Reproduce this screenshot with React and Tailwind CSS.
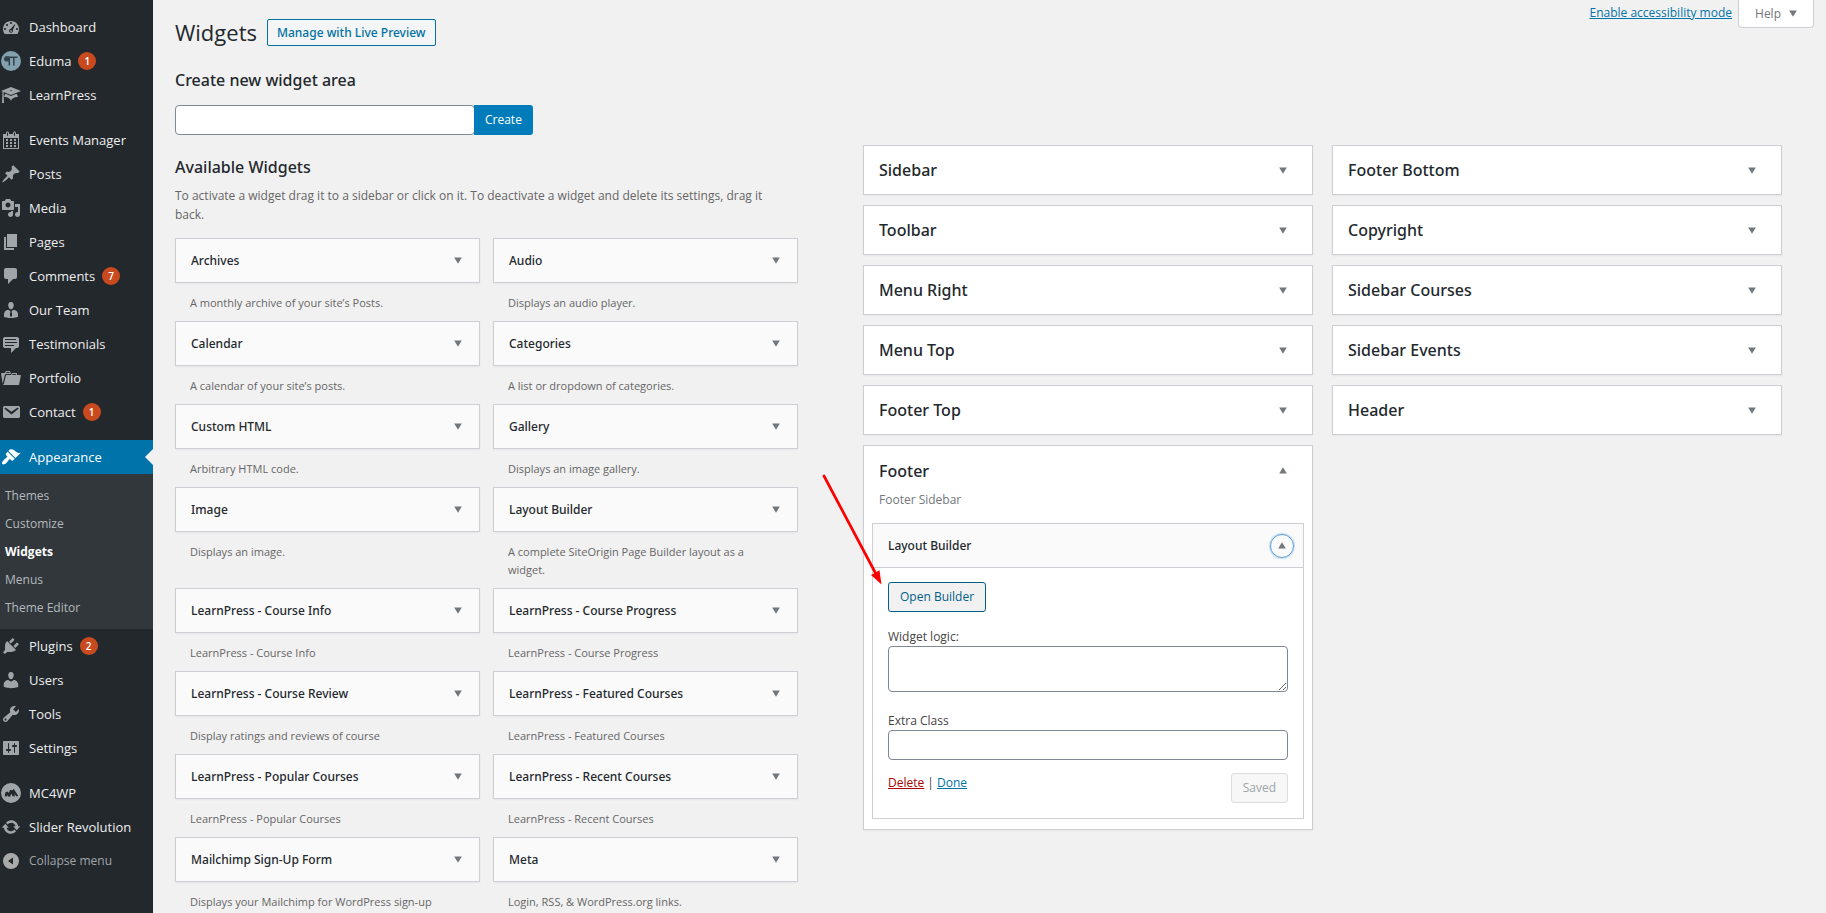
import { useState } from 'react'

// 20x20 glyphs for the admin menu
const ICONS = {
  dashboard:
    'M3.76 17h12.48c1.1-1.37 1.76-3.11 1.76-5 0-4.42-3.58-8-8-8s-8 3.58-8 8c0 1.89.66 3.63 1.76 5zM10 5c.55 0 1 .45 1 1s-.45 1-1 1-1-.45-1-1 .45-1 1-1zM6 7c.55 0 1 .45 1 1s-.45 1-1 1-1-.45-1-1 .45-1 1-1zM13.6 7.2l.6.4-2.2 5.2c.3 1.9-.6 3-2 3-1.5 0-2.3-1.3-1.9-2.5.3-.9 1-1.4 1.8-1.5zM10 13.2c-.6 0-1 .4-1 .9s.4.9 1 .9 1-.4 1-.9-.4-.9-1-.9zM4 11c.55 0 1 .45 1 1s-.45 1-1 1-1-.45-1-1 .45-1 1-1zM16 11c.55 0 1 .45 1 1s-.45 1-1 1-1-.45-1-1 .45-1 1-1z',
  learn:
    'M10 10L2.54 7.02 3 18H1l.48-11.41L0 6l10-4 10 4zm0-5c-.55 0-1 .22-1 .5s.45.5 1 .5 1-.22 1-.5-.45-.5-1-.5zm0 6l5.57-2.23c.71.94 1.2 2.07 1.36 3.3-.3-.04-.61-.07-.93-.07-2.55 0-4.78 1.37-6 3.41C8.78 13.37 6.55 12 4 12c-.32 0-.63.03-.93.07.16-1.23.65-2.36 1.36-3.3z',
  calendar:
    'M15 4h3v15H2V4h3V3c0-.41.15-.76.44-1.06.29-.29.65-.44 1.06-.44s.77.15 1.06.44c.29.3.44.65.44 1.06v1h4V3c0-.41.15-.76.44-1.06.29-.29.65-.44 1.06-.44s.77.15 1.06.44c.29.3.44.65.44 1.06v1zM6 3v2.5c0 .14.05.26.15.36.09.09.21.14.35.14s.26-.05.35-.14c.1-.1.15-.22.15-.36V3c0-.14-.05-.26-.15-.35-.09-.1-.21-.15-.35-.15s-.26.05-.35.15c-.1.09-.15.21-.15.35zm7 0v2.5c0 .14.05.26.14.36.1.09.22.14.36.14s.26-.05.36-.14c.09-.1.14-.22.14-.36V3c0-.14-.05-.26-.14-.35-.1-.1-.22-.15-.36-.15s-.26.05-.36.15c-.09.09-.14.21-.14.35zm4 15V8H3v10h14zM7 9v2H5V9h2zm2 0h2v2H9V9zm4 2V9h2v2h-2zm-6 1v2H5v-2h2zm2 0h2v2H9v-2zm4 2v-2h2v2h-2zm-6 1v2H5v-2h2zm4 2H9v-2h2v2zm4 0h-2v-2h2v2z',
  pin: 'M10.44 3.02l1.82-1.82 6.36 6.35-1.83 1.82c-1.05-.68-2.48-.57-3.41.36l-.75.75c-.92.93-1.04 2.35-.35 3.41l-1.83 1.82-2.41-2.41-2.8 2.79c-.42.42-3.38 2.71-3.8 2.29s1.86-3.39 2.28-3.81l2.79-2.79L4.1 9.36l1.83-1.82c1.05.69 2.48.57 3.4-.36l.75-.75c.93-.92 1.05-2.35.36-3.41z',
  media:
    'M13 11V4c0-.55-.45-1-1-1h-1.67L9 1H5L3.67 3H2c-.55 0-1 .45-1 1v7c0 .55.45 1 1 1h10c.55 0 1-.45 1-1zM7 4.5c1.38 0 2.5 1.12 2.5 2.5S8.38 9.5 7 9.5 4.5 8.38 4.5 7 5.62 4.5 7 4.5zM14 6h5v10.5c0 1.38-1.12 2.5-2.5 2.5S14 17.88 14 16.5s1.12-2.5 2.5-2.5c.17 0 .34.02.5.05V9h-3V6zm-4 8.05V13h2v3.5c0 1.38-1.12 2.5-2.5 2.5S7 17.88 7 16.5 8.12 14 9.5 14c.17 0 .34.02.5.05z',
  page: 'M6 15V2h10v13H6zm-1 1h8v2H3V5h2v11z',
  comment:
    'M5 2h9c1.1 0 2 .9 2 2v7c0 1.1-.9 2-2 2h-2l-5 5v-5H5c-1.1 0-2-.9-2-2V4c0-1.1.9-2 2-2z',
  person:
    'M7.3 6l-.03-.19c-.04-.37-.05-.73-.03-1.08.02-.36.1-.71.25-1.04.14-.32.31-.61.52-.86s.49-.46.83-.6c.34-.15.72-.23 1.13-.23.69 0 1.26.2 1.71.59s.76.87.91 1.44.18 1.16.09 1.78l-.03.19c-.01.09-.05.25-.11.48-.05.24-.12.47-.2.69-.08.21-.19.45-.34.72-.14.27-.3.49-.47.69-.18.19-.4.34-.67.48-.27.13-.55.19-.86.19s-.59-.06-.87-.19c-.26-.13-.49-.29-.67-.5-.18-.2-.34-.42-.49-.66-.15-.25-.26-.49-.34-.73-.09-.25-.16-.47-.21-.67-.06-.21-.1-.37-.12-.5zm9.2 6.24c.41.7.5 1.41.5 2.14v2.49c0 .03-.12.08-.29.13-.18.04-.42.13-.97.27-.55.12-1.1.24-1.65.34s-1.19.19-1.95.27c-.75.08-1.46.12-2.13.12-.68 0-1.39-.04-2.14-.12-.75-.07-1.4-.17-1.98-.27-.58-.11-1.08-.23-1.56-.34-.49-.11-.8-.21-1.06-.29L3 16.87v-2.49c0-.75.07-1.46.46-2.15s.81-1.25 1.5-1.68C5.66 10.12 7.19 10 8 10l1.67 1.67L9 13v3l1.02 1.08L11 16v-3l-.68-1.33L11.97 10c.77 0 2.2.07 2.9.52.71.45 1.21 1.02 1.63 1.72z',
  testimonial:
    'M4 3h12c.55 0 1.02.2 1.41.59S18 4.45 18 5v7c0 .55-.2 1.02-.59 1.41S16.55 14 16 14h-1l-5 5v-5H4c-.55 0-1.02-.2-1.41-.59S2 12.55 2 12V5c0-.55.2-1.02.59-1.41S3.45 3 4 3zm11 2H4v1h11V5zm1 3H4v1h12V8zm-3 3H4v1h9v-1z',
  portfolio:
    'M4 5H.78c-.37 0-.74.32-.69.84l1.56 9.99S3.5 8.47 3.86 6.7c.11-.53.61-.7.98-.7H10s-.7-2.08-.77-2.31C9.11 3.25 8.89 3 8.45 3H5.14c-.36 0-.7.23-.8.64C4.25 4.04 4 5 4 5zm4.88 0h-4s.42-1 .87-1h2.13c.48 0 1 1 1 1zM2.67 16.25c-.31.47-.76.75-1.26.75h15.73c.54 0 .92-.31 1.03-.83.44-2.19 1.68-8.44 1.68-8.44.07-.5-.3-.73-.62-.73H16V5.53c0-.16-.26-.53-.66-.53h-3.76c-.52 0-.87.58-.87.58L10 7H5.59c-.32 0-.63.19-.69.5 0 0-1.59 6.7-1.72 7.33-.07.37-.22.99-.51 1.42zM15.38 7H11s.58-1 1.13-1h2.29c.71 0 .96 1 .96 1z',
  email:
    'M3.87 4h13.25C18.37 4 19 4.59 19 5.79v8.42c0 1.19-.63 1.79-1.88 1.79H3.87c-1.25 0-1.88-.6-1.88-1.79V5.79c0-1.2.63-1.79 1.88-1.79zm6.62 8.6l6.74-5.53c.24-.2.43-.66.13-1.07-.29-.41-.82-.42-1.17-.17l-5.7 3.86L4.8 5.83c-.35-.25-.88-.24-1.17.17-.3.41-.11.87.13 1.07z',
  brush:
    'M14.48 11.06L7.41 3.99l1.5-1.5c.5-.56 2.3-.47 3.51.32 1.21.8 1.43 1.28 2.91 2.1 1.18.64 2.45 1.26 4.45.85zm-.71.71L6.7 4.7 4.93 6.47c-.39.39-.39 1.02 0 1.41l1.06 1.06c.39.39.39 1.03 0 1.42-.6.6-1.43 1.11-2.21 1.69-.35.26-.7.53-1.01.84C1.43 14.23.4 16.08 1.4 17.07c.99 1 2.84-.03 4.18-1.36.31-.31.58-.66.85-1.02.57-.78 1.08-1.61 1.69-2.21.39-.39 1.02-.39 1.41 0l1.06 1.06c.39.39 1.02.39 1.41 0z',
  plug: 'M13.11 4.36L9.87 7.6 8 5.73l3.24-3.24c.35-.34 1.05-.2 1.56.32.52.51.66 1.21.31 1.55zm-8 1.77l.91-1.12 9.01 9.01-1.19.84c-.71.71-2.63 1.16-3.82 1.16H6.14L4.9 17.26c-.59.59-1.54.59-2.12 0-.59-.58-.59-1.53 0-2.12l1.24-1.24v-3.88c0-1.13.4-3.19 1.09-3.89zm7.26 3.97l3.24-3.24c.34-.35 1.04-.21 1.55.31.52.51.66 1.21.31 1.55l-3.24 3.25z',
  user: 'M10 9.25c-2.27 0-2.73-3.44-2.73-3.44C7 4.02 7.82 2 9.97 2c2.16 0 2.98 2.02 2.71 3.81 0 0-.41 3.44-2.68 3.44zm0 2.57L12.72 10c2.39 0 4.52 2.33 4.52 4.53v2.49s-3.65 1.13-7.24 1.13c-3.65 0-7.24-1.13-7.24-1.13v-2.49c0-2.25 1.94-4.48 4.47-4.48z',
  wrench:
    'M16.68 9.77c-1.34 1.34-3.3 1.67-4.95.99l-5.41 6.52c-.99.99-2.59.99-3.58 0s-.99-2.59 0-3.57l6.52-5.42c-.68-1.65-.35-3.61.99-4.95 1.28-1.28 3.12-1.62 4.72-1.06l-2.89 2.89 2.82 2.82 2.86-2.87c.53 1.58.18 3.39-1.08 4.65zM3.81 16.21c.4.39 1.04.39 1.43 0 .4-.4.4-1.04 0-1.43-.39-.4-1.03-.4-1.43 0-.39.39-.39 1.03 0 1.43z',
  settings:
    'M18 16V4c0-.55-.45-1-1-1H3c-.55 0-1 .45-1 1v12c0 .55.45 1 1 1h14c.55 0 1-.45 1-1zM8 11h1c.55 0 1 .45 1 1s-.45 1-1 1H8v1.5c0 .28-.22.5-.5.5s-.5-.22-.5-.5V13H6c-.55 0-1-.45-1-1s.45-1 1-1h1V5.5c0-.28.22-.5.5-.5s.5.22.5.5V11zm5-2h-1c-.55 0-1-.45-1-1s.45-1 1-1h1V5.5c0-.28.22-.5.5-.5s.5.22.5.5V7h1c.55 0 1 .45 1 1s-.45 1-1 1h-1v5.5c0 .28-.22.5-.5.5s-.5-.22-.5-.5V9z',
  mc4wp:
    'M10 0a10 10 0 100 20 10 10 0 000-20zM3.6 13.2l.9-4 2.2-.8 1 1.6 1.3-3 2.3.3L12.8 6l4.4 6.7-1.7.8-2.1-2.7.4 2.7-2.1-.2-1.3-2.5-1.4 3-1.8-.4-.5-1.5-.9 1.6z',
  update:
    'M10.2 3.28c3.53 0 6.43 2.61 6.92 6h2.08l-3.5 4-3.5-4h2.32c-.45-1.97-2.21-3.45-4.32-3.45-1.45 0-2.73.71-3.54 1.78L4.95 5.66C6.23 4.2 8.11 3.28 10.2 3.28zm-.4 13.44c-3.52 0-6.43-2.61-6.92-6H.8l3.5-4c1.17 1.33 2.33 2.67 3.5 4H5.48c.45 1.97 2.21 3.45 4.32 3.45 1.45 0 2.73-.71 3.54-1.78l1.71 1.95c-1.28 1.46-3.15 2.38-5.25 2.38z',
  collapse: 'M10 2a8 8 0 100 16 8 8 0 000-16zM12 6.5v7L7 10z',
}

const MENU_TOP = [
  { label: 'Dashboard', icon: 'dashboard' },
  { label: 'Eduma', icon: 'eduma', count: 1 },
  { label: 'LearnPress', icon: 'learn' },
]

const MENU_CONTENT = [
  { label: 'Events Manager', icon: 'calendar' },
  { label: 'Posts', icon: 'pin' },
  { label: 'Media', icon: 'media' },
  { label: 'Pages', icon: 'page' },
  { label: 'Comments', icon: 'comment', count: 7 },
  { label: 'Our Team', icon: 'person' },
  { label: 'Testimonials', icon: 'testimonial' },
  { label: 'Portfolio', icon: 'portfolio' },
  { label: 'Contact', icon: 'email', count: 1 },
]

const APPEARANCE = ['Themes', 'Customize', 'Widgets', 'Menus', 'Theme Editor']

const MENU_ADMIN = [
  { label: 'Plugins', icon: 'plug', count: 2 },
  { label: 'Users', icon: 'user' },
  { label: 'Tools', icon: 'wrench' },
  { label: 'Settings', icon: 'settings' },
]

const MENU_EXTRA = [
  { label: 'MC4WP', icon: 'mc4wp' },
  { label: 'Slider Revolution', icon: 'update' },
]

const WIDGETS = [
  ['Archives', 'A monthly archive of your site’s Posts.'],
  ['Audio', 'Displays an audio player.'],
  ['Calendar', 'A calendar of your site’s posts.'],
  ['Categories', 'A list or dropdown of categories.'],
  ['Custom HTML', 'Arbitrary HTML code.'],
  ['Gallery', 'Displays an image gallery.'],
  ['Image', 'Displays an image.'],
  ['Layout Builder', 'A complete SiteOrigin Page Builder layout as a widget.'],
  ['LearnPress - Course Info', 'LearnPress - Course Info'],
  ['LearnPress - Course Progress', 'LearnPress - Course Progress'],
  ['LearnPress - Course Review', 'Display ratings and reviews of course'],
  ['LearnPress - Featured Courses', 'LearnPress - Featured Courses'],
  ['LearnPress - Popular Courses', 'LearnPress - Popular Courses'],
  ['LearnPress - Recent Courses', 'LearnPress - Recent Courses'],
  ['Mailchimp Sign-Up Form', 'Displays your Mailchimp for WordPress sign-up'],
  ['Meta', 'Login, RSS, & WordPress.org links.'],
]

const AREAS_LEFT = ['Sidebar', 'Toolbar', 'Menu Right', 'Menu Top', 'Footer Top']
const AREAS_RIGHT = ['Footer Bottom', 'Copyright', 'Sidebar Courses', 'Sidebar Events', 'Header']

function Icon({ name, className }) {
  if (name === 'eduma') {
    return (
      <svg viewBox="0 0 20 20" className="size-5 shrink-0" aria-hidden="true">
        <circle cx="10" cy="10" r="10" fill="#82a0ad" />
        <path d="M8 5.5H5.5a2.3 2.3 0 000 5H8z" fill="#32424c" />
        <path d="M4 6.2h12.5M8.300 6v8.500M12.800 6v8.500" fill="none" stroke="#32424c" strokeWidth="1.500" />
      </svg>
    )
  }
  return (
    <svg viewBox="0 0 20 20" className={`size-5 shrink-0 ${className}`} fill="currentColor" fillRule="evenodd" aria-hidden="true">
      <path d={ICONS[name]} />
    </svg>
  )
}

function Caret({ up }) {
  return (
    <svg viewBox="0 0 8 7" className="h-[7px] w-2 shrink-0" fill="#72777c" aria-hidden="true">
      <path d={up ? 'M.2 6.5L4 .2l3.8 6.3z' : 'M.2.5h7.6L4 6.8z'} />
    </svg>
  )
}

function MenuItem({ item }) {
  return (
    <li>
      <a href="#" className="flex h-[34px] items-center pl-px text-[#eee]">
        <Icon name={item.icon} className="text-[#a0a5aa]" />
        <span className="ml-2">{item.label}</span>
        {item.count && (
          <span className="ml-[7px] flex size-[18px] items-center justify-center rounded-full bg-[#ca4a1f] text-[10px] font-semibold text-white">
            {item.count}
          </span>
        )}
      </a>
    </li>
  )
}

function AdminMenu() {
  return (
    <nav className="w-[153px] shrink-0 bg-[#23282d] pt-2.5 text-[13px] leading-[18px]">
      <ul>
        {MENU_TOP.map((item) => (
          <MenuItem key={item.label} item={item} />
        ))}
      </ul>
      <ul className="mt-[11px]">
        {MENU_CONTENT.map((item) => (
          <MenuItem key={item.label} item={item} />
        ))}
      </ul>
      <a href="#" className="relative mt-[11px] flex h-[34px] items-center bg-[#0073aa] pl-px text-white">
        <Icon name="brush" className="text-white" />
        <span className="ml-2">Appearance</span>
        <span className="absolute right-0 top-[9px] border-y-8 border-r-8 border-y-transparent border-r-[#f1f1f1]" />
      </a>
      <ul className="bg-[#32373c] pb-[7px] pt-2 text-[12px]">
        {APPEARANCE.map((label) => (
          <li key={label}>
            <a
              href="#"
              className={`flex h-7 items-center pl-[5px] ${label === 'Widgets' ? 'font-bold text-white' : 'text-[#b4b9be]'}`}
            >
              {label}
            </a>
          </li>
        ))}
      </ul>
      <ul>
        {MENU_ADMIN.map((item) => (
          <MenuItem key={item.label} item={item} />
        ))}
      </ul>
      <ul className="mt-[11px]">
        {MENU_EXTRA.map((item) => (
          <MenuItem key={item.label} item={item} />
        ))}
      </ul>
      <button type="button" className="flex h-[34px] items-center pl-px text-[12px] text-[#a0a5aa]">
        <Icon name="collapse" className="text-[#aaa]" />
        <span className="ml-2">Collapse menu</span>
      </button>
    </nav>
  )
}

function Widget({ title, description }) {
  return (
    <div>
      <button
        type="button"
        className="flex h-[45px] w-full items-center justify-between border border-[#ccd0d4] bg-[#fafafa] pl-[15px] pr-[17px] font-['Noto_Sans','Open_Sans',sans-serif] text-[12px] font-medium shadow-xs"
      >
        {title}
        <Caret />
      </button>
      <p className="pb-[9px] pl-[15px] pr-[30px] pt-[11px] text-[11px] leading-[18px] text-[#666]">{description}</p>
    </div>
  )
}

function Area({ title }) {
  return (
    <button
      type="button"
      className="flex h-[50px] w-full items-center justify-between border border-[#ccd0d4] bg-white pl-[15px] pr-[25px] font-['Noto_Sans','Open_Sans',sans-serif] text-[16px] font-medium shadow-xs"
    >
      {title}
      <Caret />
    </button>
  )
}

function FooterArea() {
  const [logic, setLogic] = useState('')
  const [extraClass, setExtraClass] = useState('')

  return (
    <section className="relative border border-[#ccd0d4] bg-white px-2 pb-2.5 shadow-xs">
      <button
        type="button"
        className="flex h-[49px] w-full items-center justify-between pl-[7px] pr-[17px] font-['Noto_Sans','Open_Sans',sans-serif] text-[16px] font-medium"
      >
        Footer
        <Caret up />
      </button>
      <p className="mb-[18px] pl-[7px] text-[12px] leading-[10px] text-[#72777c]">Footer Sidebar</p>

      <div className="border border-[#ccd0d4]">
        <div className="flex h-[44px] items-center justify-between border-b border-[#ccd0d4] bg-[#fafafa] pl-[15px] pr-[9px] font-['Noto_Sans','Open_Sans',sans-serif] text-[12px] font-medium">
          <h3>Layout Builder</h3>
          <button
            type="button"
            aria-label="Toggle Layout Builder"
            className="flex size-6 items-center justify-center rounded-full border border-[#5b9dd9] shadow-[0_0_2px_#5b9dd9]"
          >
            <Caret up />
          </button>
        </div>
        <div className="px-[15px] pb-[15px] pt-3.5 text-[12px] text-[#444]">
          <button
            type="button"
            className="h-[30px] rounded-[3px] border border-[#016087] bg-[#f1f1f1] px-[11px] text-[#016087]"
          >
            Open Builder
          </button>
          <label htmlFor="logic" className="mt-4 block leading-[18px]">
            Widget logic:
          </label>
          <textarea
            id="logic"
            value={logic}
            onChange={(e) => setLogic(e.target.value)}
            className="block h-[46px] w-full rounded-sm border border-[#7e8993] bg-white px-2"
          />
          <label htmlFor="extra" className="mt-5 block leading-[18px]">
            Extra Class
          </label>
          <input
            id="extra"
            type="text"
            value={extraClass}
            onChange={(e) => setExtraClass(e.target.value)}
            className="block h-[30px] w-full rounded-sm border border-[#7e8993] bg-white px-2"
          />
          <div className="mt-[13px] flex items-start justify-between">
            <p className="leading-[20px]">
              <a href="#" className="text-[#a00] underline">Delete</a>
              {' | '}
              <a href="#" className="text-[#0073aa] underline">Done</a>
            </p>
            <button
              type="button"
              disabled
              className="h-[30px] rounded-[3px] border border-[#ddd] bg-[#f7f7f7] px-[11px] text-[#a0a5aa]"
            >
              Saved
            </button>
          </div>
        </div>
      </div>

      {/* pointer to the Open Builder button */}
      <svg viewBox="0 0 62 112" className="pointer-events-none absolute -left-[43px] top-[27px] h-[112px] w-[62px]" aria-hidden="true">
        <path d="M3 3l52 98" stroke="#f00" strokeWidth="2.7" strokeLinecap="round" />
        <path d="M60.5 111.5L50 102l8.500-4.700z" fill="#f00" />
      </svg>
    </section>
  )
}

export default function App() {
  const [areaName, setAreaName] = useState('')

  return (
    <div className="flex min-h-screen bg-[#f1f1f1] font-['Open_Sans','Noto_Sans',sans-serif] text-[#23282d]">
      <AdminMenu />
      <main className="min-w-0 flex-1">
        <header className="flex items-start justify-between pl-[22px] pr-3">
          <div className="flex items-center pt-[19px]">
            <h1 className="text-[22px] leading-[27px]">Widgets</h1>
            <a
              href="#"
              className="ml-2.5 flex h-[27px] items-center rounded-[2px] border border-[#0071a1] bg-[#f3f5f6] px-[9px] font-['Noto_Sans','Open_Sans',sans-serif] text-[12px] font-medium text-[#0071a1]"
            >
              Manage with Live Preview
            </a>
          </div>
          <div className="flex items-start text-[12px]">
            <a href="#" className="mr-1.5 mt-1 leading-[18px] text-[#0073aa] underline">
              Enable accessibility mode
            </a>
            <button
              type="button"
              className="flex h-7 items-center gap-2 rounded-b border border-t-0 border-[#ccd0d4] bg-white px-4 text-[#72777c]"
            >
              Help
              <Caret />
            </button>
          </div>
        </header>

        <div className="grid grid-cols-[623fr_919fr] gap-x-[65px] pl-[22px] pr-11">
          <div>
            <form className="pt-[22px]" onSubmit={(e) => e.preventDefault()}>
              <label
                htmlFor="area"
                className="block font-['Noto_Sans','Open_Sans',sans-serif] text-[16px] font-medium leading-6"
              >
                Create new widget area
              </label>
              <div className="mt-[13px] flex">
                <input
                  id="area"
                  type="text"
                  value={areaName}
                  onChange={(e) => setAreaName(e.target.value)}
                  className="h-[30px] w-[300px] rounded-sm border border-[#7e8993] bg-white px-2"
                />
                <button type="submit" className="-ml-px h-[30px] rounded-r-[3px] bg-[#007cba] px-[11px] text-[12px] text-white">
                  Create
                </button>
              </div>
            </form>

            <h2 className="mt-5 font-['Noto_Sans','Open_Sans',sans-serif] text-[16px] font-medium leading-6">
              Available Widgets
            </h2>
            <p className="mb-3.5 mt-[7px] pr-2.5 text-[12px] leading-[19px] text-[#666]">
              To activate a widget drag it to a sidebar or click on it. To deactivate a widget and delete its settings, drag it
              back.
            </p>
            <div className="grid grid-cols-2 gap-x-[13px]">
              {WIDGETS.map(([title, description]) => (
                <Widget key={title} title={title} description={description} />
              ))}
            </div>
          </div>

          <div className="grid grid-cols-2 items-start gap-x-[19px] pt-[99px]">
            <div className="flex flex-col gap-2.5">
              {AREAS_LEFT.map((title) => (
                <Area key={title} title={title} />
              ))}
              <FooterArea />
            </div>
            <div className="flex flex-col gap-2.5">
              {AREAS_RIGHT.map((title) => (
                <Area key={title} title={title} />
              ))}
            </div>
          </div>
        </div>
      </main>
    </div>
  )
}
